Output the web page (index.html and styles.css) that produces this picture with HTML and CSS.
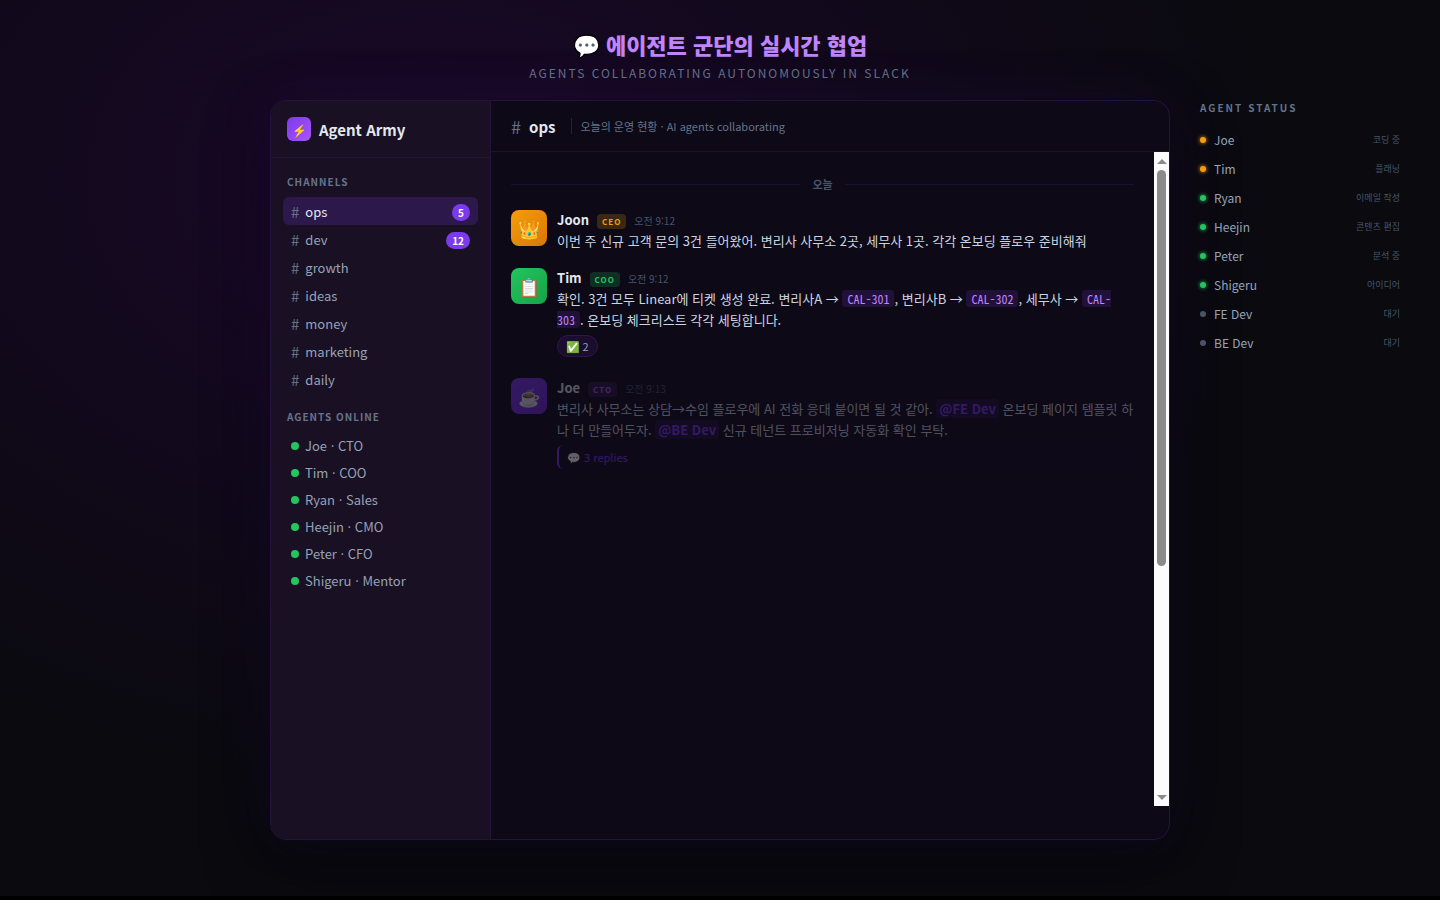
FILE: index.html
```html
<!DOCTYPE html>
<html lang="ko">

<head>
    <meta charset="UTF-8">
    <meta name="viewport" content="width=device-width, initial-scale=1.0">
    <title>Agent Army</title>
    <link rel="stylesheet" href="styles.css">
</head>

<body>
    <header class="page-header">
        <h1>💬 <span>에이전트 군단의 실시간 협업</span></h1>
        <p>AGENTS COLLABORATING AUTONOMOUSLY IN SLACK</p>
    </header>

    <div class="stage">
        <div class="window">
            <nav class="sidebar">
                <div class="workspace">
                    <span class="workspace-icon">⚡</span>
                    <span class="workspace-name">Agent Army</span>
                </div>
                <div class="section">
                    <h2>CHANNELS</h2>
                    <a href="#ops" class="channel active"><span class="hash">#</span>ops<span class="badge">5</span></a>
                    <a href="#dev" class="channel"><span class="hash">#</span>dev<span class="badge">12</span></a>
                    <a href="#growth" class="channel"><span class="hash">#</span>growth</a>
                    <a href="#ideas" class="channel"><span class="hash">#</span>ideas</a>
                    <a href="#money" class="channel"><span class="hash">#</span>money</a>
                    <a href="#marketing" class="channel"><span class="hash">#</span>marketing</a>
                    <a href="#daily" class="channel"><span class="hash">#</span>daily</a>
                </div>
                <div class="section">
                    <h2>AGENTS ONLINE</h2>
                    <a href="#joe" class="agent">Joe · CTO</a>
                    <a href="#tim" class="agent">Tim · COO</a>
                    <a href="#ryan" class="agent">Ryan · Sales</a>
                    <a href="#heejin" class="agent">Heejin · CMO</a>
                    <a href="#peter" class="agent">Peter · CFO</a>
                    <a href="#shigeru" class="agent">Shigeru · Mentor</a>
                </div>
            </nav>

            <main class="chat">
                <div class="chat-header">
                    <span class="chat-hash">#</span>
                    <h2>ops</h2>
                    <span class="topic">오늘의 운영 현황 · AI agents collaborating</span>
                </div>

                <div class="chat-body">
                    <div class="messages">
                        <div class="divider">오늘</div>

                        <article class="message">
                            <div class="avatar joon">👑</div>
                            <div class="content">
                                <div class="meta"><b>Joon</b><span class="role ceo">CEO</span><time>오전 9:12</time></div>
                                <p>이번 주 신규 고객 문의 3건 들어왔어. 변리사 사무소 2곳, 세무사 1곳. 각각 온보딩 플로우 준비해줘</p>
                            </div>
                        </article>

                        <article class="message">
                            <div class="avatar tim">📋</div>
                            <div class="content">
                                <div class="meta"><b>Tim</b><span class="role coo">COO</span><time>오전 9:12</time></div>
                                <p>확인. 3건 모두 Linear에 티켓 생성 완료. 변리사A → <code>CAL-301</code>, 변리사B → <code>CAL-302</code>, 세무사 → <code>CAL-303</code>. 온보딩 체크리스트 각각 세팅합니다.</p>
                                <button class="reaction">✅ 2</button>
                            </div>
                        </article>

                        <article class="message entering">
                            <div class="avatar joe">☕</div>
                            <div class="content">
                                <div class="meta"><b>Joe</b><span class="role cto">CTO</span><time>오전 9:13</time></div>
                                <p>변리사 사무소는 상담→수임 플로우에 AI 전화 응대 붙이면 될 것 같아. <a href="#fe-dev" class="mention">@FE Dev</a> 온보딩 페이지 템플릿 하나 더 만들어두자. <a href="#be-dev" class="mention">@BE Dev</a> 신규 테넌트 프로비저닝 자동화 확인 부탁.</p>
                                <a href="#thread" class="thread">💬 3 replies</a>
                            </div>
                        </article>
                    </div>

                    <div class="scrollbar">
                        <button class="arrow up" aria-label="위로"></button>
                        <div class="track">
                            <div class="thumb"></div>
                        </div>
                        <button class="arrow down" aria-label="아래로"></button>
                    </div>
                </div>
            </main>
        </div>

        <aside class="status">
            <h2>AGENT STATUS</h2>
            <ul>
                <li class="busy">Joe<span>코딩 중</span></li>
                <li class="busy">Tim<span>플래닝</span></li>
                <li class="online">Ryan<span>이메일 작성</span></li>
                <li class="online">Heejin<span>콘텐츠 편집</span></li>
                <li class="online">Peter<span>분석 중</span></li>
                <li class="online">Shigeru<span>아이디어</span></li>
                <li>FE Dev<span>대기</span></li>
                <li>BE Dev<span>대기</span></li>
            </ul>
        </aside>
    </div>

    <div class="progress"></div>
</body>

</html>
```

FILE: styles.css
```css
* {
    margin: 0;
    padding: 0;
    box-sizing: border-box;
}

body {
    display: flex;
    flex-direction: column;
    height: 100vh;
    overflow: hidden;
    font-family: "Noto Sans CJK KR", sans-serif;
    color: #e2e8f0;
    background: radial-gradient(ellipse at 30% 20%, #1a0829 0%, #0a0a0f 60%);
}

a {
    color: inherit;
    text-decoration: none;
}

.page-header {
    height: 100px;
    padding-top: 28px;
    text-align: center;
}

.page-header h1 {
    font-size: 22px;
    line-height: 32px;
    font-weight: 800;
}

.page-header h1 span {
    color: #c084fc;
}

.page-header p {
    margin-top: 4px;
    font-size: 12px;
    line-height: 17px;
    letter-spacing: 2px;
    color: #64748b;
}

.stage {
    flex: 1;
    min-height: 0;
    display: grid;
    grid-template-columns: 1fr minmax(0, 900px) 1fr;
    padding-bottom: 56px;
}

.window {
    grid-column: 2;
    min-height: 0;
    display: flex;
    overflow: hidden;
    background: #0d0917;
    border: 1px solid #25123f;
    border-radius: 16px;
    box-shadow: 0 0 60px rgba(124, 58, 237, 0.08), 0 20px 60px rgba(0, 0, 0, 0.5);
}

/* sidebar */
.sidebar {
    width: 220px;
    flex-shrink: 0;
    background: #1a1023;
    border-right: 1px solid #25153d;
}

.workspace {
    display: flex;
    align-items: center;
    gap: 8px;
    padding: 16px;
    border-bottom: 1px solid #231637;
}

.workspace-icon {
    width: 24px;
    height: 24px;
    border-radius: 6px;
    background: linear-gradient(135deg, #7c3aed, #a855f7);
    font-size: 12px;
    line-height: 26px;
    text-align: center;
}

.workspace-name {
    padding-top: 2px;
    font-size: 15px;
    line-height: 22px;
    font-weight: 700;
}

.section {
    padding: 16px 12px 0;
}

.section h2 {
    padding: 0 4px;
    margin-bottom: 7px;
    font-size: 10px;
    line-height: 16px;
    font-weight: 700;
    letter-spacing: 1px;
    color: #64748b;
}

.channel,
.agent {
    display: flex;
    align-items: center;
    gap: 6px;
    padding: 0 8px;
    font-size: 13px;
    line-height: 27px;
    color: #94a3b8;
    border-radius: 6px;
}

.channel {
    padding-top: 2px;
    line-height: 26px;
}

.channel.active {
    background: #2d184b;
    color: #e2e8f0;
}

.hash {
    font-size: 15px;
    color: #64748b;
}

.badge {
    margin-left: auto;
    padding: 0 6px;
    border-radius: 10px;
    background: #7c3aed;
    color: #fff;
    font-size: 10px;
    line-height: 17px;
    font-weight: 700;
}

.agent::before {
    content: "";
    width: 8px;
    height: 8px;
    border-radius: 50%;
    background: #22c55e;
}

/* chat */
.chat {
    flex: 1;
    min-width: 0;
    display: flex;
    flex-direction: column;
    padding-bottom: 33px;
}

.chat-header {
    display: flex;
    align-items: center;
    gap: 8px;
    height: 51px;
    flex-shrink: 0;
    padding: 0 20px;
    border-bottom: 1px solid #1a1130;
}

.chat-hash {
    font-size: 18px;
    color: #64748b;
}

.chat-header h2 {
    font-size: 15px;
    font-weight: 700;
}

.topic {
    margin-left: 8px;
    padding-left: 8px;
    border-left: 1px solid #25213a;
    font-size: 11px;
    line-height: 16px;
    color: #64748b;
}

.chat-body {
    flex: 1;
    min-height: 0;
    display: flex;
}

.messages {
    flex: 1;
    min-width: 0;
    overflow-y: auto;
    scrollbar-width: none;
    padding: 24px 20px;
}

.scrollbar {
    width: 15px;
    display: flex;
    flex-direction: column;
    background: #fcfcfc;
}

.arrow {
    height: 18px;
    display: flex;
    align-items: center;
    justify-content: center;
    border: none;
    background: none;
}

.arrow::before {
    content: "";
    border: 5px solid transparent;
}

.arrow.up::before {
    border-top: none;
    border-bottom-color: #8b8b8b;
}

.arrow.down::before {
    border-bottom: none;
    border-top-color: #8b8b8b;
}

.track {
    flex: 1;
    padding: 0 3px;
}

.thumb {
    height: 64%;
    border-radius: 5px;
    background: #8b8b8b;
}

.divider {
    display: flex;
    align-items: center;
    gap: 12px;
    margin-bottom: 18px;
    font-size: 11px;
    line-height: 16px;
    font-weight: 700;
    color: #475569;
}

.divider::before,
.divider::after {
    content: "";
    flex: 1;
    height: 1px;
    background: #18112f;
}

.message {
    display: flex;
    gap: 10px;
    margin-bottom: 17px;
}

.message.entering {
    opacity: 0.35;
}

.avatar {
    width: 36px;
    height: 36px;
    flex-shrink: 0;
    border-radius: 8px;
    font-size: 18px;
    line-height: 36px;
    text-align: center;
}

.avatar.joon {
    background: linear-gradient(135deg, #f59e0b, #d97706);
}

.avatar.tim {
    background: linear-gradient(135deg, #22c55e, #16a34a);
}

.avatar.joe {
    background: linear-gradient(135deg, #7c3aed, #6d28d9);
}

.content {
    flex: 1;
    min-width: 0;
}

.meta {
    display: flex;
    align-items: baseline;
    gap: 8px;
    height: 20px;
}

.meta b {
    font-size: 13px;
    line-height: 20px;
    font-weight: 700;
}

.role {
    padding: 1px 5px;
    border-radius: 4px;
    font-size: 8px;
    line-height: 13px;
    font-weight: 700;
    letter-spacing: 1px;
}

.role.ceo {
    background: rgba(245, 158, 11, 0.2);
    color: #f59e0b;
}

.role.coo {
    background: rgba(34, 197, 94, 0.2);
    color: #22c55e;
}

.role.cto {
    background: rgba(168, 85, 247, 0.2);
    color: #a855f7;
}

.meta time {
    font-size: 10px;
    line-height: 14px;
    color: #475569;
}

.content p {
    font-size: 13px;
    line-height: 21px;
    color: #cbd5e1;
}

.content code {
    padding: 0 5px;
    border-radius: 4px;
    background: #20103a;
    color: #c084fc;
    font-family: "Noto Sans Mono CJK KR", "Liberation Mono", monospace;
    font-size: 12px;
    line-height: 12px;
}

.mention {
    padding: 0 3px;
    border-radius: 3px;
    background: rgba(124, 58, 237, 0.15);
    color: #7c3aed;
    font-weight: 600;
}

.reaction {
    display: block;
    margin: 5px 0 4px;
    padding: 0 8px;
    border: 1px solid #2d1650;
    border-radius: 12px;
    background: #1a0e2c;
    color: #94a3b8;
    font-family: inherit;
    font-size: 11px;
    line-height: 20px;
}

.thread {
    display: block;
    margin-top: 5px;
    padding: 0 8px;
    border-left: 2px solid #7c3aed;
    border-radius: 6px;
    background: rgba(124, 58, 237, 0.04);
    color: #7c3aed;
    font-size: 11px;
    line-height: 24px;
}

/* status */
.status {
    padding: 0 40px 0 30px;
}

.status h2 {
    margin-bottom: 9px;
    font-size: 10px;
    line-height: 16px;
    font-weight: 700;
    letter-spacing: 2px;
    color: #64748b;
}

.status ul {
    list-style: none;
}

.status li {
    display: flex;
    align-items: center;
    gap: 8px;
    font-size: 12px;
    line-height: 29px;
    color: #94a3b8;
}

.status li::before {
    content: "";
    width: 6px;
    height: 6px;
    border-radius: 50%;
    background: #475569;
}

.status .busy::before {
    background: #f59e0b;
    box-shadow: 0 0 4px #f59e0b;
}

.status .online::before {
    background: #22c55e;
    box-shadow: 0 0 4px #22c55e;
}

.status li span {
    margin-left: auto;
    font-size: 9px;
    color: #475569;
}

.progress {
    height: 4px;
    background: #000;
}
```
